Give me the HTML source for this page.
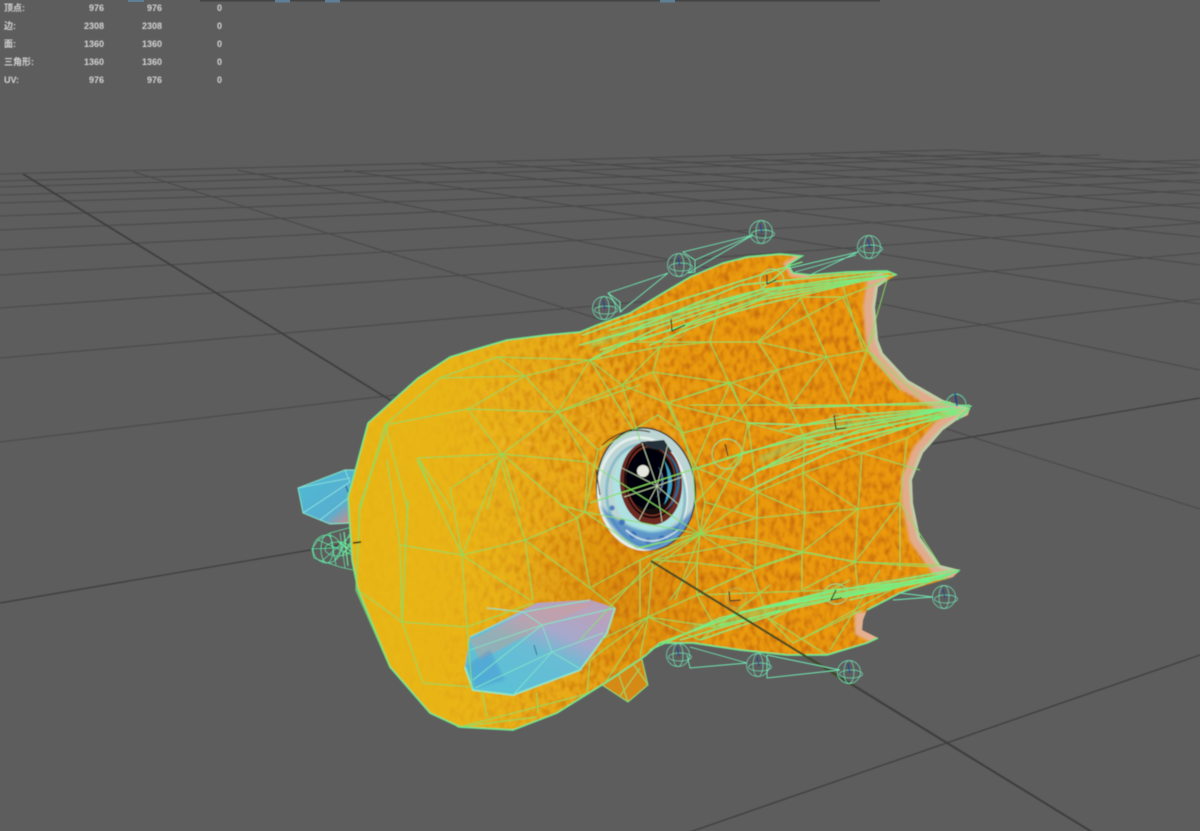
<!DOCTYPE html>
<html lang="zh"><head><meta charset="utf-8"><title>Viewport</title>
<style>
html,body{margin:0;padding:0;background:#5d5d5d;width:1200px;height:831px;overflow:hidden}
svg{display:block}
text{font-family:"Liberation Sans","Noto Sans CJK SC",sans-serif;font-size:9px;font-weight:700;fill:#d4d4d4}
</style></head><body>
<svg width="1200" height="831" viewBox="0 0 1200 831" xmlns="http://www.w3.org/2000/svg">
<defs>
<filter id="soft" x="-5%" y="-5%" width="110%" height="110%"><feGaussianBlur stdDeviation=".5"/></filter>
<filter id="soft2" x="-20%" y="-20%" width="140%" height="140%"><feGaussianBlur stdDeviation="1.2"/></filter>
<filter id="soft3" x="-20%" y="-20%" width="140%" height="140%"><feGaussianBlur stdDeviation="2.5"/></filter>
<filter id="tex" x="0" y="0" width="1" height="1" color-interpolation-filters="sRGB"><feTurbulence type="fractalNoise" baseFrequency=".2 .11" numOctaves="3" seed="7"/><feColorMatrix values="0 0 0 0 .78  0 0 0 0 .42  0 0 0 0 .03  2.6 0 0 0 -1.12"/><feGaussianBlur stdDeviation=".7"/></filter>
<filter id="tex2" x="0" y="0" width="1" height="1" color-interpolation-filters="sRGB"><feTurbulence type="fractalNoise" baseFrequency=".12 .1" numOctaves="2" seed="11"/><feColorMatrix values="0 0 0 0 1  0 0 0 0 .78  0 0 0 0 .3  4 0 0 0 -2.2"/></filter>
<linearGradient id="body" gradientUnits="userSpaceOnUse" x1="350" y1="0" x2="960" y2="0">
<stop offset="0" stop-color="#e8b718"/><stop offset=".2" stop-color="#e9b518"/><stop offset=".36" stop-color="#e8aa16"/><stop offset=".55" stop-color="#e99c12"/><stop offset="1" stop-color="#ec980e"/></linearGradient>
<linearGradient id="texfade" gradientUnits="userSpaceOnUse" x1="430" y1="0" x2="620" y2="0"><stop offset="0" stop-color="#111"/><stop offset=".4" stop-color="#666"/><stop offset="1" stop-color="#fff"/></linearGradient>
<mask id="texmask"><rect x="340" y="240" width="640" height="500" fill="url(#texfade)"/></mask>
<radialGradient id="shade" gradientUnits="userSpaceOnUse" cx="620" cy="590" r="110"><stop offset="0" stop-color="#c56f08" stop-opacity=".4"/><stop offset="1" stop-color="#c56f08" stop-opacity="0"/></radialGradient>
<linearGradient id="finb" gradientUnits="userSpaceOnUse" x1="560" y1="600" x2="520" y2="695"><stop offset="0" stop-color="#b8a2bc"/><stop offset=".3" stop-color="#a6a8cc"/><stop offset=".55" stop-color="#68bcd4"/><stop offset="1" stop-color="#5cc0d6"/></linearGradient>
<linearGradient id="fint" gradientUnits="userSpaceOnUse" x1="310" y1="480" x2="350" y2="525"><stop offset="0" stop-color="#50b8d2"/><stop offset=".65" stop-color="#58aed0"/><stop offset="1" stop-color="#d88a80"/></linearGradient>
<clipPath id="bc"><path id="bp" d="M368 423L418 378L450 357L473 350L507 340L547 335L580 332L597 325L630 313L663 293L690 277L723 263L747 257L780 254L802 256L788 265L793 273L810 275L847 272L887 271L897 275L888 280L878 287L875 307L878 340L883 353L908 380L943 400L970 408L968 415L957 420L943 430L923 453L912 480L913 503L920 537L940 565L960 570L953 577L900 593L867 610L863 620L862 630L878 638L867 643L827 655L787 655L740 650L693 643L660 643L645 656L605 683L557 713L513 730L460 727L430 713L390 667L358 590L352 560L348 497L358 460Z"/></clipPath>
<clipPath id="ec"><ellipse cx="646" cy="489" rx="49" ry="61" transform="rotate(-7 646 489)"/></clipPath>
<g id="sph" fill="none" stroke="#6fe8b8" stroke-width=".7"><circle r="11.5"/><ellipse rx="5" ry="11.5"/><ellipse rx="11.5" ry="4" transform="translate(2 2)"/><path d="M-1-8L1 1" stroke="#28479a" stroke-width="1.3"/></g>
</defs>

<rect width="1200" height="831" fill="#5d5d5d"/>
<rect x="200" width="680" height="1.5" fill="#444"/>
<rect x="128" y="0" width="16" height="2" fill="#5f7f96"/><rect x="275" y="0" width="15" height="2.5" fill="#5f7f96"/><rect x="325" y="0" width="15" height="2.5" fill="#5f7f96"/><rect x="660" y="0" width="15" height="2.5" fill="#5f7f96"/>

<g filter="url(#soft)">
<text x="4" y="11">顶点:</text><text x="4" y="29">边:</text><text x="4" y="47">面:</text><text x="4" y="65">三角形:</text><text x="4" y="83">UV:</text>
<g text-anchor="end">
<text x="104" y="11">976</text><text x="162" y="11">976</text><text x="222" y="11">0</text>
<text x="104" y="29">2308</text><text x="162" y="29">2308</text><text x="222" y="29">0</text>
<text x="104" y="47">1360</text><text x="162" y="47">1360</text><text x="222" y="47">0</text>
<text x="104" y="65">1360</text><text x="162" y="65">1360</text><text x="222" y="65">0</text>
<text x="104" y="83">976</text><text x="162" y="83">976</text><text x="222" y="83">0</text>
</g>

<!-- grid -->
<path fill="none" stroke="#484848" stroke-width="1.1" d="M0 442L1200 299M0 358L1200 253M0 308L1200 223M0 275L1200 203M0 250L1200 190M0 230L1200 180M0 216L1200 173M0 203L1200 167M0 195L1200 160M0 187L1100 155M0 181L1040 153M0 174L950 150L1200 165
M134 172L1200 509M237 170L1200 370M344 170L1200 304M421 164L1200 265M497 163L1200 237M570 161L1200 222M650 159L1200 208M730 157L1200 195M810 155L1200 183M880 153L1200 173"/>
<path fill="none" stroke="#404040" stroke-width="1.4" d="M0 603L1200 398M690 832L1200 655"/>
<path fill="none" stroke="#3c3c3c" stroke-width="1.7" d="M23 174L1092 832"/>

<!-- left fin -->
<path d="M298 488L345 470L356 470L350 523L330 524L303 513Z" fill="url(#fint)" stroke="#7fdcc4" stroke-width="1.2"/>
<path fill="none" stroke="#8fe6df" stroke-width=".8" d="M298 488L350 478M303 513L350 482M320 520L352 495M345 470L350 482"/>
<path d="M346 486l2 6" stroke="#23408e" stroke-width="1"/>

<!-- head ball -->
<g fill="none" stroke="#62e6a4" stroke-width=".8">
<path d="M352 527L330 533L318 540L312 549L314 558L322 561L340 567L353 570"/>
<circle cx="327" cy="549" r="14"/><ellipse cx="327" cy="549" rx="6" ry="14"/><ellipse cx="338" cy="549" rx="13" ry="7"/>
<path d="M318 540L352 555M322 561L350 536M330 533L336 565M340 533L345 568M312 549L352 547M335 560L352 530"/>
</g>
<path stroke="#6ff29a" stroke-width="1.1" fill="none" d="M338 541L352 552M342 556L352 540M344 532L348 566"/>

<!-- small under-fin -->
<path d="M641 655L648 685L628 702L602 685Z" fill="#d58a12" stroke="#7fe27a" stroke-width="1"/>
<path fill="none" stroke="#8ce06a" stroke-width=".9" d="M618 672L628 702M632 662L648 685M610 680L636 660M620 696L640 668"/>

<!-- body -->
<use href="#bp" fill="url(#body)"/>
<g clip-path="url(#bc)">
<rect x="340" y="240" width="640" height="500" fill="url(#shade)"/>
<g mask="url(#texmask)"><rect x="340" y="240" width="640" height="500" filter="url(#tex)"/></g>
<rect x="470" y="390" width="220" height="90" filter="url(#tex2)" opacity=".25"/>
<g filter="url(#soft2)">
<path d="M802 256L788 265L793 273L810 275" fill="none" stroke="#e5ad8e" stroke-width="8"/>
<path d="M888 280L878 287L875 307L878 340L883 353L908 380L943 400L970 408" fill="none" stroke="#e2ab8c" stroke-width="24"/>
<path d="M968 415L943 430L923 453L912 480L913 503L920 537L940 565L960 570" fill="none" stroke="#e2ab8c" stroke-width="22"/>
<path d="M862 612L862 630L878 638" fill="none" stroke="#e5b092" stroke-width="14"/>
<path d="M888 280L878 287L875 307L878 340L883 353L908 380L943 400L970 408L957 420L943 430L923 453L912 480L913 503L920 537L940 565L960 570" fill="none" stroke="#b4d6b0" stroke-width="5"/>
</g>
</g>

<!-- lower fin -->
<path d="M615 608L590 600L537 603L470 637L465 667L473 690L513 695L580 670L607 633Z" fill="url(#finb)"/>
<path d="M470 640L540 607L596 603L540 628L480 660Z" fill="#d69a8a" opacity=".4"/>
<path d="M467 665L475 688L505 680L490 650Z" fill="#3f8fd6" opacity=".4" filter="url(#soft2)"/>
<path d="M465 667L473 690L513 695L580 670L607 633L615 608" fill="none" stroke="#8ceac6" stroke-width="1.6"/>
<path fill="none" stroke="#7fe6c6" stroke-width=".9" d="M542 625L615 608M542 625L473 680M542 625L470 650M542 625L552 652L582 670M552 652L513 695M552 652L603 633M552 652L475 688M523 612L487 608M542 625L523 612L470 637M590 600L523 612"/>
<path d="M534 645l3 10" stroke="#35608e" stroke-width=".9"/>

<!-- eye -->
<g transform="rotate(-7 646 489)">
<ellipse cx="646" cy="489" rx="50" ry="62" fill="#3a3a34"/>
<ellipse cx="646" cy="489" rx="48.5" ry="60.5" fill="#bcd4d4"/>
<ellipse cx="642" cy="493" rx="44" ry="56" fill="none" stroke="#e2eeea" stroke-width="3"/>
<ellipse cx="645" cy="495" rx="39" ry="51" fill="none" stroke="#8abdcb" stroke-width="3"/>
<ellipse cx="648" cy="490" rx="35" ry="46" fill="#aee2e2"/>
</g>
<g clip-path="url(#ec)">
<path d="M600 505Q615 540 650 552Q690 545 700 500Q680 532 650 532Q622 528 600 505Z" fill="#3878c0" opacity=".7" filter="url(#soft2)"/>
<g fill="#2a66b4" opacity=".8" filter="url(#soft)"><circle cx="622" cy="522" r="3"/><circle cx="633" cy="535" r="3.5"/><circle cx="648" cy="541" r="3"/><circle cx="662" cy="539" r="3.5"/><circle cx="612" cy="508" r="2.5"/><circle cx="676" cy="530" r="2.5"/></g>
<path d="M626 530Q650 552 678 530" fill="none" stroke="#e6f2f2" stroke-width="2" opacity=".7"/>
</g>
<ellipse cx="651" cy="483" rx="31" ry="42" fill="#6e2a22" transform="rotate(-4 651 483)"/>
<ellipse cx="651" cy="481" rx="27" ry="37.5" fill="#14100f" transform="rotate(-4 651 481)"/>
<ellipse cx="651" cy="481" rx="24.5" ry="34.5" fill="none" stroke="#8a3426" stroke-width="1.2" transform="rotate(-4 651 481)"/>
<ellipse cx="649" cy="479" rx="23" ry="30" fill="#04060e"/>
<path d="M661 450A27 33 0 0 1 666 510Q678 498 677 475Q674 458 661 450Z" fill="#1a6e9a"/>
<path d="M664 460Q680 484 664 505Q672 482 664 460Z" fill="#3ea0c4"/>
<path d="M658 466Q670 482 656 498Q666 482 658 466Z" fill="#5a6fa0"/>
<path d="M640 442L664 440L672 452L650 448Z" fill="#27333a"/>
<circle cx="643" cy="471" r="6" fill="#e5e5de"/>
<path fill="none" stroke="#cfe6b8" stroke-width=".7" d="M657 486L642 443M657 486L668 444M657 486L682 477M657 486L679 505M657 486L662 522M657 486L639 520M657 486L624 497M657 486L620 467"/>

<!-- wireframe -->
<g fill="none" stroke="#86de5e" stroke-width="1" stroke-opacity=".95" stroke-linejoin="round">
<path d="M385 425L468 409L558 412L502 454L418 458M385 425L440 378L525 376L468 409L502 454M497 357L590 360M497 357L525 376L558 412M525 376L590 360L558 412M385 425L360 510M385 425L408 510M418 458L440 510M418 458L452 510M502 454L453 487M502 454L487 510M502 454L520 510M502 454L588 462L558 412M440 378L497 357M590 360L620 342M590 360L660 347M558 412L640 385"/>
<path d="M417 460L462 555M450 487L462 555M500 460L462 555M500 460L525 540M462 555L525 540L577 518L590 588L525 540M462 555L400 545L387 460M400 545L402 622L467 627L462 555M525 540L533 600M462 555L530 600M502 454L577 518M467 627L533 603M402 622L358 590M402 622L423 683L472 687M467 627L472 687M482 690L487 717M537 693L538 713M590 660L587 693M460 727L590 693M457 727L537 717M590 588L615 608M590 588L640 560M577 518L585 512L588 462M640 560L700 534"/>
<path d="M700 534L757 518L805 513L858 509L900 503M700 534L705 502L697 468M700 534L757 492L803 473L862 453L907 438L955 408M700 534L755 540L802 552L855 562M700 534L755 568M700 534L802 552M700 534L742 453M700 534L640 560M700 534L675 600M700 534L585 512M757 518L757 492M757 518L755 568M805 513L803 473L805 438M805 513L802 552L802 590M858 509L862 453M858 509L803 473M858 509L802 552M858 509L855 562M900 503L855 562M900 503L907 438M900 503L900 570M855 562L858 590M755 568L802 552M855 562L940 565M700 534L588 462"/>
<path d="M730 382L748 423L805 438M730 382L790 408L805 438M790 408L850 405L900 430M730 382L667 403L622 385L653 372M667 403L748 423L742 453L697 468L667 403M748 423L757 492M697 468L590 503M622 385L558 412M622 385L590 360M653 372L730 383L777 370L827 357L867 350M758 342L777 370L792 408M758 342L827 357M843 297L867 350L900 390M802 297L758 342M827 357L790 407M867 350L850 397M840 277L863 350M800 297L827 357M710 342L750 427M730 383L667 403M777 370L730 420M827 357L850 405M867 350L920 397M660 347L622 385M660 347L710 342M653 372L660 347M590 360L622 385"/>
<path d="M690 405L970 405M653 560L697 563L752 570L802 552L857 562L898 565L935 567M648 617L697 595L752 570M648 617L715 627L767 617L793 643M715 627L697 595M767 617L827 655M752 570L767 617M697 563L697 595M653 560L648 617L640 657M653 560L580 640M700 640L648 617L605 683M793 643L862 610M697 595L833 590"/>
<path d="M700 534L653 560M700 534L697 563M700 534L610 600M757 540L653 560M757 568L697 595M805 552L752 570M805 552L857 562M855 562L802 590M900 503L940 565M862 453L920 470M805 438L862 453M757 492L805 513M705 502L757 518M697 468L757 492M590 503L697 468M640 560L640 617M600 640L648 617M590 660L648 617M670 600L697 563M770 585L700 640M850 580L770 620M880 570L830 650M900 585L800 640"/>
<path d="M622 385L640 440M653 372L683 433M730 383L693 470M742 453L695 503M700 534L742 453M620 342L710 342M710 342L758 342M843 297L758 342M887 280L843 297M887 280L867 350M802 297L843 297M720 300L710 342M660 347L720 300M590 360L660 347M875 330L867 350"/>
</g>
<!-- dense bright bands -->
<g fill="none" stroke="#74ef7c" stroke-width="1.3" stroke-linecap="round">
<path d="M580 345L660 323L760 290L890 272M590 360L660 327L770 290L880 277M583 335L680 300L802 262M610 330L760 290L790 265M640 340L770 295L860 280M600 350L760 305L888 275M650 345L760 300L895 275M620 335L740 285L870 272"/>
<path d="M955 408L805 438L742 453M955 408L805 425L748 423M955 408L820 430L697 468M962 412L860 430L757 470M965 408L805 445L742 480M950 402L790 408M958 414L850 440L760 470M940 418L805 450M955 408L850 415L780 430M960 410L830 452L750 490"/>
<path d="M660 643L743 612L833 590L900 583L958 572M660 643L750 610L860 590L950 575M700 640L800 605L900 585M740 612L835 596L930 580M720 625L840 598L945 578M680 640L780 610M650 650L720 618L840 590L955 570M850 600L945 575"/>
</g>
<g fill="none" stroke="#6ff59a" stroke-width="5" stroke-opacity=".5" filter="url(#soft3)">
<path d="M590 345L700 305L880 275M760 460L830 428L955 408M690 630L835 593L950 574"/>
</g>
<!-- body silhouette wire -->
<path d="M368 423L418 378L450 357L473 350L507 340L547 335L580 332L597 325L630 313L663 293L690 277L723 263L747 257L780 254L802 256L788 265L793 273L810 275L847 272L887 271L897 275M970 408L957 420M960 570L900 593L867 610M878 638L867 643L827 655L787 655L740 650L693 643L660 643L645 656L605 683L557 713L513 730L460 727L430 713L390 667L358 590L352 560L348 497L358 460L368 423" fill="none" stroke="#6fe68a" stroke-width="1.7"/>
<path d="M388 424L360 505L356 590L390 667M408 500L402 622M940 402L970 407L958 418" fill="none" stroke="#7ee068" stroke-width="1.6" opacity=".7"/>

<!-- eye wire ring -->
<path fill="none" stroke="#86de5e" stroke-width="1" d="M598 450L633 430L658 415L683 433L693 470L695 503L700 533L637 548L585 512L598 450M585 512L560 505M700 533L640 548M693 470L742 453M683 433L730 420M633 430L590 360M598 450L558 412"/>
<path fill="none" stroke="#3a3520" stroke-width="1" d="M602 445Q625 425 650 432M596 470L600 495"/>

<!-- axis overlay on fish -->
<path d="M651 561L854 686" stroke="#3e4a20" stroke-width="2.1"/>
<path d="M854 686L1092 832" stroke="#3c3c3c" stroke-width="1.8"/>

<!-- locators -->
<g fill="none" stroke="#7ee68a" stroke-width=".9">
<circle cx="727" cy="454" r="15"/><circle cx="772" cy="281" r="12"/><ellipse cx="836" cy="594" rx="12" ry="10"/><circle cx="676" cy="328" r="10" opacity=".6"/><circle cx="736" cy="598" r="10" opacity=".5"/><circle cx="838" cy="425" r="11" opacity=".6"/>
</g>
<g fill="none" stroke="#1d2a2a" stroke-width="1.1">
<path d="M725 444L728 456M767 275L767 284L776 280M671 319L672 331L685 325M834 415L836 429L846 428M729 591L730 601L741 600M836 590L831 600L842 598"/>
</g>

<!-- bones -->
<g fill="none" stroke="#6fecb4" stroke-width=".9">
<path d="M753 235L683 252L695 260L695 272L688 273L753 235M753 235L695 260M668 273L608 293L620 302L620 312L668 273M608 293L622 312"/>
<path d="M858 252L790 268M858 252L810 275M856 255L795 272"/>
<path d="M690 647L747 663L690 668L687 655M767 655L840 670L767 678L767 655M900 593L933 597L893 600"/>
</g>
<use href="#sph" x="761" y="232"/><use href="#sph" x="679" y="265"/><use href="#sph" x="604" y="308"/><use href="#sph" x="869" y="247"/>
<use href="#sph" x="678" y="655"/><use href="#sph" x="758" y="665"/><use href="#sph" x="849" y="672"/><use href="#sph" x="944" y="597"/>
<path d="M956 394A11 11 0 0 1 966 404M946 404A11 11 0 0 1 956 394M948 405L972 406" fill="none" stroke="#62e0ae" stroke-width=".9"/>
<path d="M955 393L957 406" stroke="#23408e" stroke-width="1.6"/>
<path d="M353 543l8-1" stroke="#1a1a12" stroke-width="1.4"/>
</g>
</svg>
</body></html>
